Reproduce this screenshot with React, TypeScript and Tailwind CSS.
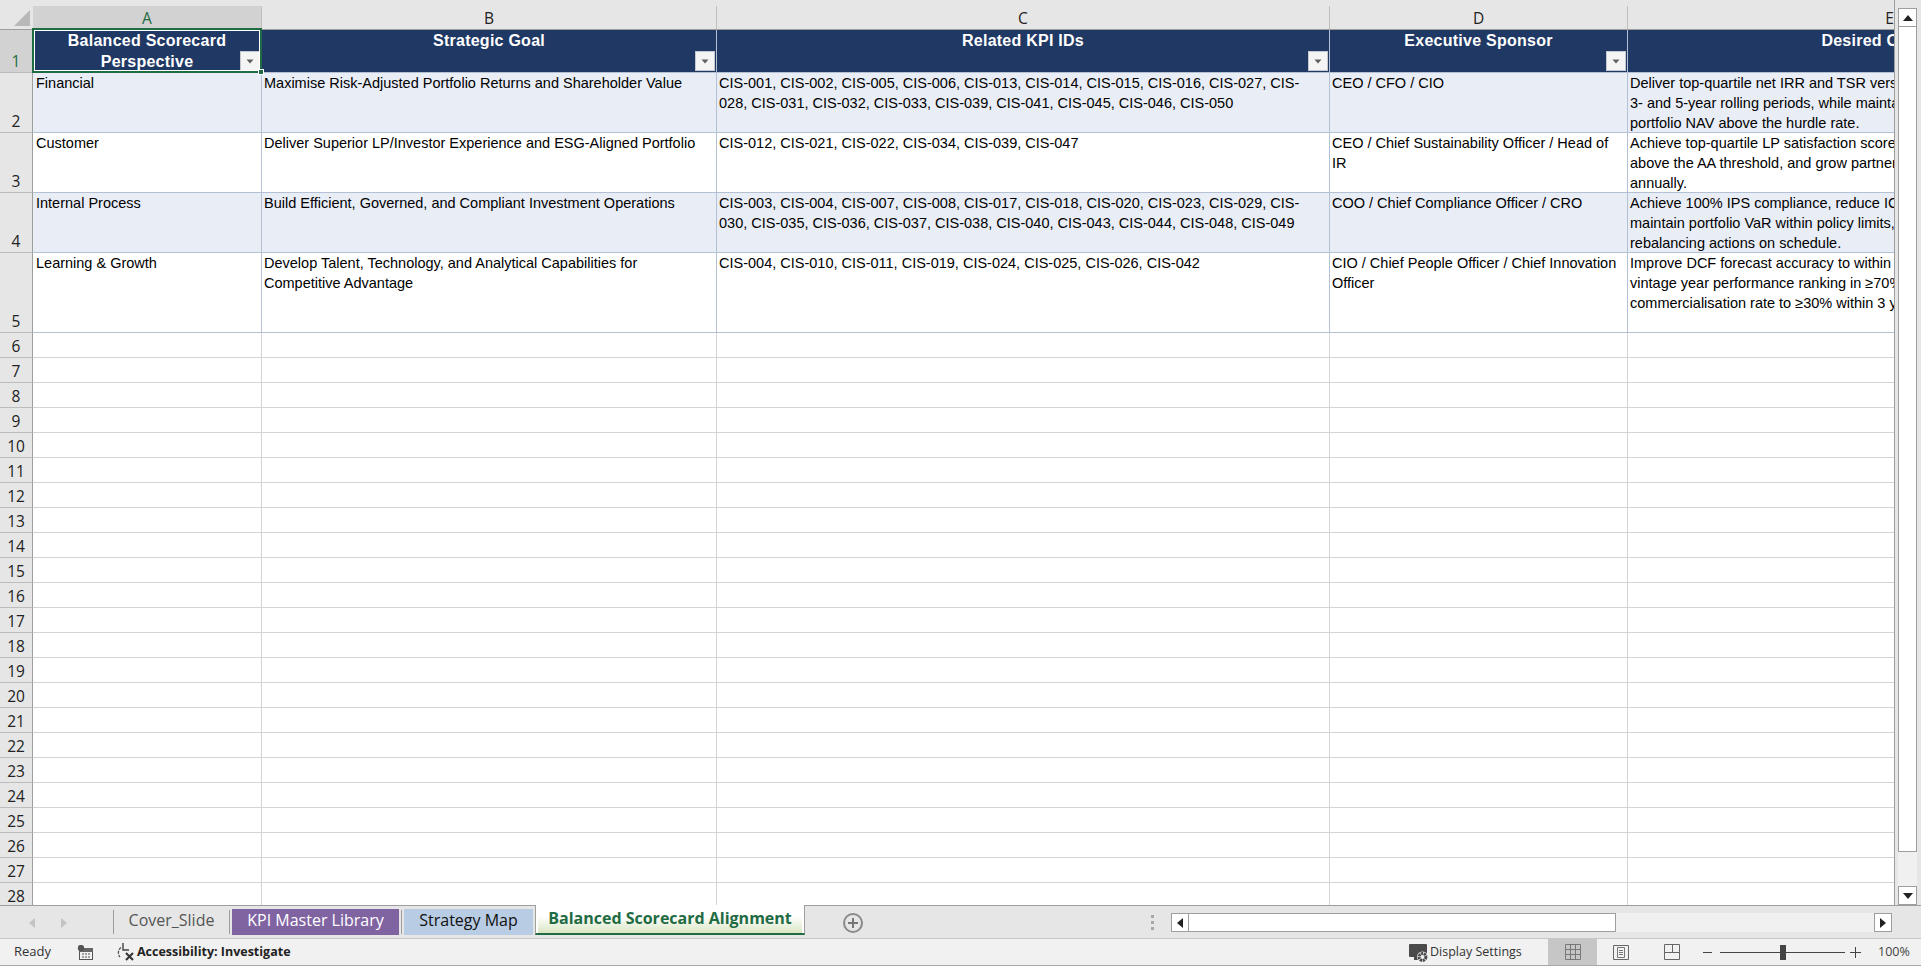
const FONT = "font-['Liberation_Sans',Arial,sans-serif]";

const colLetters = ["A", "B", "C", "D", "E"];

type Row = { n: number; a: string; b: string[]; c: string[]; d: string[]; e: string[] };

const rows: Row[] = [
  {
    n: 2,
    a: "Financial",
    b: ["Maximise Risk-Adjusted Portfolio Returns and Shareholder Value"],
    c: [
      "CIS-001, CIS-002, CIS-005, CIS-006, CIS-013, CIS-014, CIS-015, CIS-016, CIS-027, CIS-",
      "028, CIS-031, CIS-032, CIS-033, CIS-039, CIS-041, CIS-045, CIS-046, CIS-050",
    ],
    d: ["CEO / CFO / CIO"],
    e: [
      "Deliver top-quartile net IRR and TSR versus peers over",
      "3- and 5-year rolling periods, while maintaining",
      "portfolio NAV above the hurdle rate.",
    ],
  },
  {
    n: 3,
    a: "Customer",
    b: ["Deliver Superior LP/Investor Experience and ESG-Aligned Portfolio"],
    c: ["CIS-012, CIS-021, CIS-022, CIS-034, CIS-039, CIS-047"],
    d: ["CEO / Chief Sustainability Officer / Head of", "IR"],
    e: [
      "Achieve top-quartile LP satisfaction scores, keep ESG",
      "above the AA threshold, and grow partner commitments",
      "annually.",
    ],
  },
  {
    n: 4,
    a: "Internal Process",
    b: ["Build Efficient, Governed, and Compliant Investment Operations"],
    c: [
      "CIS-003, CIS-004, CIS-007, CIS-008, CIS-017, CIS-018, CIS-020, CIS-023, CIS-029, CIS-",
      "030, CIS-035, CIS-036, CIS-037, CIS-038, CIS-040, CIS-043, CIS-044, CIS-048, CIS-049",
    ],
    d: ["COO / Chief Compliance Officer / CRO"],
    e: [
      "Achieve 100% IPS compliance, reduce IC cycle times,",
      "maintain portfolio VaR within policy limits, and complete",
      "rebalancing actions on schedule.",
    ],
  },
  {
    n: 5,
    a: "Learning & Growth",
    b: ["Develop Talent, Technology, and Analytical Capabilities for", "Competitive Advantage"],
    c: ["CIS-004, CIS-010, CIS-011, CIS-019, CIS-024, CIS-025, CIS-026, CIS-042"],
    d: ["CIO / Chief People Officer / Chief Innovation", "Officer"],
    e: [
      "Improve DCF forecast accuracy to within target range,",
      "vintage year performance ranking in ≥70% of funds, and",
      "commercialisation rate to ≥30% within 3 years.",
    ],
  },
];

const emptyRows = Array.from({ length: 23 }, (_, i) => i + 6);

function FilterBtn() {
  return (
    <div className="absolute right-[1px] bottom-[1px] w-[20px] h-[20px] bg-[#f4f4f4] border border-[#c4c8cf] flex items-center justify-center">
      <svg width="8" height="5" viewBox="0 0 8 5">
        <path d="M0.5 0.5h7L4 4.5z" fill="#606060" />
      </svg>
    </div>
  );
}

function Lines({ lines }: { lines: string[] }) {
  return (
    <>
      {lines.map((l, i) => (
        <div key={i} className="whitespace-nowrap h-[20px]">
          {l}
        </div>
      ))}
    </>
  );
}

function ColHeader({ label, active }: { label: string; active?: boolean }) {
  return (
    <div className="h-[30px] pt-[6px] border-b border-[#9e9e9e]">
      <div
        className={
          "h-[23px] flex items-center justify-center border-r border-[#bfbfbf] text-[15.5px] leading-[22px] font-['Open_Sans',sans-serif] " +
          (active ? "bg-[#d2d2d2] text-[#1e6b41]" : "bg-[#e6e6e6] text-[#222]")
        }
      >
        {label}
      </div>
    </div>
  );
}

function HeadCell({ lines, selected }: { lines: string[]; selected?: boolean }) {
  return (
    <div
      className={
        "relative h-[43px] bg-[#203864] border-r border-b border-[#b4c0d4] text-white font-bold text-[16px] leading-[21px] text-center tracking-[0.25px] " +
        FONT
      }
    >
      {lines.map((l) => (
        <div key={l} className="whitespace-nowrap">
          {l}
        </div>
      ))}
      <FilterBtn />
      {selected && (
        <>
          <div className="absolute -left-[1px] -top-[2px] -right-[1px] bottom-[-1px] border-2 border-[#1f6b43] pointer-events-none z-10">
            <div className="w-full h-full border border-white" />
          </div>
          <div className="absolute -right-[3px] -bottom-[3px] w-[6px] h-[6px] bg-[#1f6b43] border border-white z-20" />
        </>
      )}
    </div>
  );
}

function RowNum({ n, h, active }: { n: number; h: string; active?: boolean }) {
  return (
    <div
      className={
        h +
        " flex items-end justify-center border-r border-b border-[#bcbcbc] border-r-[#9e9e9e] text-[15.5px] leading-[22px] font-['Open_Sans',sans-serif] " +
        (active ? "bg-[#d2d2d2] text-[#1e6b41]" : "bg-[#e6e6e6] text-[#222]")
      }
    >
      {n}
    </div>
  );
}

function BodyCell({ lines, alt, h, first }: { lines: string[]; alt: boolean; h: string; first?: boolean }) {
  return (
    <div
      className={
        h +
        " border-r border-b border-[#b4c0d4] text-[14.5px] leading-[20px] text-black overflow-hidden " +
        (first ? "pl-[3px] " : "pl-[2px] ") +
        (alt ? "bg-[#e9edf6] " : "bg-white ") +
        FONT
      }
    >
      <Lines lines={lines} />
    </div>
  );
}

function Tab({ label, className }: { label: string; className: string }) {
  return (
    <div
      className={
        "h-[26px] mt-[3px] pb-[4px] flex items-center justify-center text-[16px] font-['Open_Sans',sans-serif] " +
        className
      }
    >
      {label}
    </div>
  );
}

function TabSep({ className }: { className?: string }) {
  return <div className={"w-[1px] h-[24px] mt-[4px] bg-[#9e9e9e] " + (className ?? "")} />;
}

function ScrollBtn({ dir }: { dir: "up" | "down" | "left" | "right" }) {
  const d = {
    up: "M0 6 L5 0 L10 6z",
    down: "M0 0 L10 0 L5 6z",
    left: "M6 0 V10 L0 5z",
    right: "M0 0 V10 L6 5z",
  }[dir];
  const vert = dir === "up" || dir === "down";
  return (
    <div
      className={
        "bg-white border border-[#9e9e9e] flex items-center justify-center shrink-0 " +
        (vert ? "w-[19px] h-[19px]" : "w-[18px] h-[19px]")
      }
    >
      <svg width={vert ? 10 : 6} height={vert ? 6 : 10} viewBox={vert ? "0 0 10 6" : "0 0 6 10"}>
        <path d={d} fill="#222" />
      </svg>
    </div>
  );
}

export default function App() {
  return (
    <div className="w-[1921px] h-[966px] overflow-hidden flex flex-col bg-[#e6e6e6]">
      <div className="flex h-[906px] border-b border-[#9e9e9e]">
        <div className="w-[1894px] overflow-hidden">
          <div className="grid grid-cols-[33px_229px_455px_613px_298px_524px] w-[2152px]">
            <div className="relative h-[30px] bg-[#e6e6e6] border-b border-[#9e9e9e]">
              <svg className="absolute left-[14px] top-[10px]" width="16" height="16" viewBox="0 0 16 16">
                <path d="M16 0V16H0z" fill="#b8b8b8" />
              </svg>
            </div>
            {colLetters.map((c, i) => (
              <ColHeader key={c} label={c} active={i === 0} />
            ))}

            <RowNum n={1} h="h-[43px]" active />
            <HeadCell lines={["Balanced Scorecard", "Perspective"]} selected />
            <HeadCell lines={["Strategic Goal"]} />
            <HeadCell lines={["Related KPI IDs"]} />
            <HeadCell lines={["Executive Sponsor"]} />
            <HeadCell lines={["Desired Outcome"]} />

            {rows.map((r, i) => {
              const alt = i % 2 === 0;
              const h = r.n === 5 ? "h-[80px]" : "h-[60px]";
              return [
                <RowNum key={"n" + r.n} n={r.n} h={h} />,
                <BodyCell key={"a" + r.n} lines={[r.a]} alt={alt} h={h} first />,
                <BodyCell key={"b" + r.n} lines={r.b} alt={alt} h={h} />,
                <BodyCell key={"c" + r.n} lines={r.c} alt={alt} h={h} />,
                <BodyCell key={"d" + r.n} lines={r.d} alt={alt} h={h} />,
                <BodyCell key={"e" + r.n} lines={r.e} alt={alt} h={h} />,
              ];
            })}

            {emptyRows.map((n) => [
              <RowNum key={"n" + n} n={n} h="h-[25px]" />,
              ...colLetters.map((c) => (
                <div key={c + n} className="h-[25px] bg-white border-r border-b border-[#d4d4d4]" />
              )),
            ])}
          </div>
        </div>
        <div className="w-[27px] flex flex-col items-start bg-[#e6e6e6] pt-[8px] pl-[3px] border-l border-[#9e9e9e]">
          <ScrollBtn dir="up" />
          <div className="w-[19px] h-[825px] bg-white border-x border-b border-[#9e9e9e] shrink-0" />
          <div className="flex-1 w-[19px] bg-[#f0f0f0]" />
          <ScrollBtn dir="down" />
        </div>
      </div>

      <div className="h-[33px] flex bg-[#e6e6e6] border-b border-[#c6c6c6]">
        <div className="w-[113px] flex items-start pl-[29px] pt-[12px] gap-[26px]">
          <svg width="6" height="10" viewBox="0 0 6 10"><path d="M6 0V10L0 5z" fill="#c4c4c4" /></svg>
          <svg width="6" height="10" viewBox="0 0 6 10"><path d="M0 0V10L6 5z" fill="#c4c4c4" /></svg>
        </div>
        <div className="flex items-start">
          <TabSep />
          <Tab label="Cover_Slide" className="w-[115px] text-[#555] bg-[#e6e6e6]" />
          <TabSep className="mr-[2px]" />
          <Tab label="KPI Master Library" className="w-[167px] text-white bg-[#8064a2]" />
          <TabSep className="mx-[2px]" />
          <Tab label="Strategy Map" className="w-[129px] text-[#111] bg-[#b8cce4]" />
          <div className="w-[270px] h-[30px] ml-[2px] -mt-[1px] border-x border-[#9e9e9e] border-b-2 border-b-[#1f6b43] relative z-10">
            <div className="h-full border-x-2 border-white bg-gradient-to-b from-white from-40% to-[#d9e6c3] text-[#1f6b43] font-bold text-[16px] pb-[3px] flex items-center justify-center font-['Open_Sans',sans-serif]">
              Balanced Scorecard Alignment
            </div>
          </div>
          <div className="ml-[38px] mt-[7px] w-[20px] h-[20px] rounded-full border-2 border-[#8a8a8a] flex items-center justify-center">
            <svg width="12" height="12" viewBox="0 0 12 12"><path d="M6 1V11M1 6H11" stroke="#777" strokeWidth="2" /></svg>
          </div>
        </div>
        <div className="flex-1" />
        <div className="w-[3px] flex flex-col gap-[3px] mt-[9px] mr-[17px] items-center">
          <div className="w-[3px] h-[3px] bg-[#a8a8a8]" />
          <div className="w-[3px] h-[3px] bg-[#a8a8a8]" />
          <div className="w-[3px] h-[3px] bg-[#a8a8a8]" />
        </div>
        <div className="flex w-[721px] h-[19px] mt-[7px] mr-[29px] bg-[#f0f0f0]">
          <ScrollBtn dir="left" />
          <div className="w-[427px] h-[19px] bg-white border-y border-r border-[#9e9e9e]" />
          <div className="flex-1" />
          <ScrollBtn dir="right" />
        </div>
      </div>

      <div className="flex-1 flex items-center bg-[#f1f1f1] border-b border-[#a8a8a8] text-[13px] text-[#333] font-['Open_Sans',sans-serif]">
        <span className="ml-[14px] w-[63px]">Ready</span>
        <svg width="16" height="15" viewBox="0 0 16 15" className="mr-[22px]">
          <rect x="2.5" y="3.5" width="13" height="11" fill="none" stroke="#555" />
          <rect x="2" y="3" width="14" height="4" fill="#666" />
          <circle cx="4" cy="3" r="3.2" fill="#555" />
          <path d="M5 9h2M8 9h2M11 9h2M5 12h2M8 12h2M11 12h2" stroke="#555" />
        </svg>
        <svg width="20" height="20" viewBox="0 0 20 20" className="mr-[2px]">
          <path d="M6 5.5a6.5 6.5 0 0 0-1 9.5" fill="none" stroke="#555" strokeWidth="1.3" strokeDasharray="3 1" />
          <path d="M8 1v7h6" fill="none" stroke="#444" strokeWidth="1.4" />
          <path d="M11 11l7 7M18 11l-7 7" fill="none" stroke="#333" strokeWidth="2" />
        </svg>
        <span className="font-bold text-[12.5px] text-[#222]">Accessibility: Investigate</span>
        <div className="flex-1" />
        <svg width="20" height="19" viewBox="0 0 20 19" className="mr-[1px] mt-[2px]">
          <rect x="0" y="0" width="18" height="13" rx="1" fill="#4a4a4a" />
          <rect x="5" y="13" width="5" height="3" fill="#4a4a4a" />
          <circle cx="13.5" cy="13" r="5.5" fill="#f1f1f1" />
          <circle cx="13.5" cy="13" r="3.4" fill="none" stroke="#4a4a4a" strokeWidth="3" strokeDasharray="2.2 0.6" />
          <circle cx="13.5" cy="13" r="1.5" fill="#f1f1f1" />
        </svg>
        <span className="w-[118px] text-[12.5px]">Display Settings</span>
        <div className="w-[49px] h-[26px] bg-[#c6c6c6] flex items-center justify-center">
          <svg width="16" height="16" viewBox="0 0 16 16">
            <path d="M.5.5h15v15H.5zM5.5.5v15M10.5.5v15M.5 5.5h15M.5 10.5h15" fill="none" stroke="#777" />
          </svg>
        </div>
        <div className="w-[48px] flex justify-center">
          <svg width="16" height="15" viewBox="0 0 16 15">
            <path d="M.5.5h15v14H.5z" fill="none" stroke="#666" />
            <path d="M4.5 2.5h7v10h-7zM6 5.5h4M6 7.5h4M6 9.5h4" fill="none" stroke="#777" />
          </svg>
        </div>
        <div className="w-[54px] flex justify-center">
          <svg width="16" height="16" viewBox="0 0 16 16">
            <path d="M.5.5h15v15H.5zM8.5.5v8M.5 8.5h15" fill="none" stroke="#666" />
          </svg>
        </div>
        <div className="w-[9px] h-[1px] bg-[#444] ml-[4px] mr-[8px]" />
        <div className="relative w-[125px] h-[1px] bg-[#444]">
          <div className="absolute left-[60px] -top-[7px] w-[6px] h-[15px] bg-[#444]" />
        </div>
        <svg width="11" height="11" viewBox="0 0 11 11" className="ml-[5px] mr-[17px]">
          <path d="M5.5 0v11M0 5.5h11" stroke="#444" />
        </svg>
        <span className="w-[43px] text-[12.5px] text-[#444]">100%</span>
      </div>
    </div>
  );
}
